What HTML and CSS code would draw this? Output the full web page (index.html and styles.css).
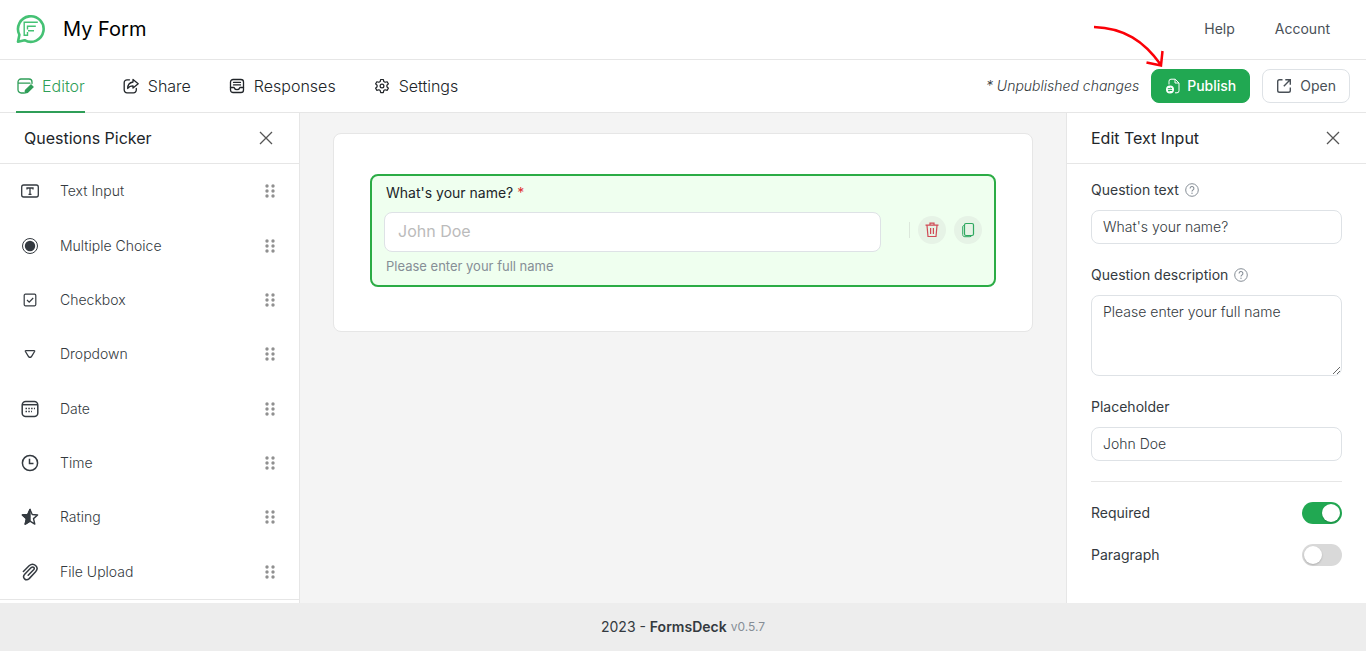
FILE: index.html
```html
<!DOCTYPE html>
<html lang="en">
<head>
    <meta charset="UTF-8">
    <meta name="viewport" content="width=device-width, initial-scale=1.0">
    <title>My Form - FormsDeck</title>
    <link rel="stylesheet" href="styles.css">
</head>
<body>
    <!-- Shared icons -->
    <svg class="sprite" aria-hidden="true">
        <symbol id="icon-close" viewBox="0 0 14 14">
            <path d="M1 1l12 12M13 1L1 13" fill="none" stroke="currentColor" stroke-width="1.3"/>
        </symbol>
        <symbol id="icon-drag" viewBox="0 0 10 14">
            <g fill="currentColor">
                <circle cx="2" cy="2" r="1.7"/><circle cx="8" cy="2" r="1.7"/>
                <circle cx="2" cy="7" r="1.7"/><circle cx="8" cy="7" r="1.7"/>
                <circle cx="2" cy="12" r="1.7"/><circle cx="8" cy="12" r="1.7"/>
            </g>
        </symbol>
        <symbol id="icon-help" viewBox="0 0 14 14">
            <g fill="none" stroke="currentColor">
                <circle cx="7" cy="7" r="6.3" stroke-width="1"/>
                <path d="M5.1 5.5a1.9 1.9 0 1 1 2.8 1.6c-.6.4-.9.7-.9 1.5" stroke-width="1.1"/>
            </g>
            <circle cx="7" cy="10.3" r=".7" fill="currentColor"/>
        </symbol>
    </svg>

    <header class="topbar">
        <a href="#" class="logo" aria-label="FormsDeck">
            <svg width="30" height="30" viewBox="0 0 30 30" fill="none" stroke="#45c174">
                <path d="M3.4 20.8A12.8 12.8 0 1 1 8.6 26.2L2 27.7z" stroke-width="2.6" stroke-linejoin="round"/>
                <path d="M21.8 8.3H8.2v13h3.300v-3.300M11.500 15.500v-3.300h8.300M12 16.800h6" stroke-width="1.400"/>
            </svg>
        </a>
        <h1>My Form</h1>
        <nav class="top-links">
            <a href="#">Help</a>
            <a href="#">Account</a>
        </nav>
    </header>

    <div class="toolbar">
        <nav class="tabs">
            <a href="#" class="tab active">
                <svg width="18" height="18" viewBox="0 0 18 18" fill="none" stroke="currentColor" stroke-width="1.3" stroke-linecap="round">
                    <path d="M8 16H5.2A3.2 3.2 0 0 1 2 12.800V5a3 3 0 0 1 3-3h8a3 3 0 0 1 3 3v1.500M2 6.200h12"/>
                    <path d="M9 16l.5-2.700 5.500-5.400 2 2-5.500 5.500z" fill="currentColor"/>
                </svg>
                Editor
            </a>
            <a href="#" class="tab">
                <svg width="18" height="18" viewBox="0 0 18 18" fill="none" stroke="currentColor" stroke-width="1.3" stroke-linejoin="round" stroke-linecap="round">
                    <path d="M7.500 2.800H5a2.800 2.800 0 0 0-2.800 2.800V13A2.800 2.800 0 0 0 5 15.800h6.500a2.800 2.800 0 0 0 2.800-2.800v-1.500"/>
                    <path d="M11 2.500l5.200 4.300L11 11V8.800c-2.600 0-4 .7-5.300 2.700 0-3.600 2-6 5.300-6.500z"/>
                </svg>
                Share
            </a>
            <a href="#" class="tab">
                <svg width="18" height="18" viewBox="0 0 18 18" fill="none" stroke="currentColor" stroke-width="1.3" stroke-linejoin="round" stroke-linecap="round">
                    <rect x="2.500" y="2.500" width="13" height="13" rx="2.600"/>
                    <path d="M5.500 5.400h7M5.500 7.900h7M2.500 10.500h3.600c.4 1.500 1.300 2.200 2.900 2.200s2.500-.7 2.900-2.200h3.600"/>
                </svg>
                Responses
            </a>
            <a href="#" class="tab">
                <svg width="18" height="18" viewBox="0 0 18 18" fill="none" stroke="currentColor" stroke-width="1.2" stroke-linejoin="round">
                    <path d="M7.700 2.500h2.600l.5 2 1.300.8 2-.6 1.300 2.200-1.500 1.400v1.500l1.500 1.400-1.300 2.200-2-.6-1.300.8-.5 2H7.700l-.5-2-1.300-.8-2 .6-1.300-2.200 1.500-1.400V8.300L2.600 6.900l1.300-2.200 2 .6 1.300-.8z"/>
                    <circle cx="9" cy="9" r="1.900"/>
                </svg>
                Settings
            </a>
        </nav>
        <div class="actions">
            <em class="status">* Unpublished changes</em>
            <div class="publish">
                <button type="button" class="btn btn-primary">
                    <svg width="16" height="16" viewBox="0 0 16 16" fill="none" stroke="currentColor" stroke-linejoin="round">
                        <path d="M4 6.500V3.200A2 2 0 0 1 6 1.200h4.200L14 5v7.800a2 2 0 0 1-2 2h-2M10 1.400V5h3.800"/>
                        <circle cx="5" cy="11.500" r="4" fill="currentColor" stroke="none"/>
                        <path d="M2.800 10.700h4l-1.200-1.200M7.200 12.500h-4l1.200 1.200" stroke="#21a852"/>
                    </svg>
                    Publish
                </button>
                <svg class="arrow" width="74" height="44" viewBox="0 0 74 44" fill="none" stroke="#fb0007" stroke-width="2.500">
                    <path d="M2 2C32 3 52 16 69 40M54.500 37.500L69 40.500 70.500 26" />
                </svg>
            </div>
            <button type="button" class="btn">
                <svg width="16" height="16" viewBox="0 0 16 16" fill="none" stroke="currentColor" stroke-width="1.400">
                    <path d="M6.500 1.700H3.500A1.800 1.800 0 0 0 1.700 3.500v9A1.800 1.800 0 0 0 3.500 14.300h9a1.800 1.800 0 0 0 1.800-1.800V9.500M9.300 1.700h5v5M14.200 1.800L7.800 8.200"/>
                </svg>
                Open
            </button>
        </div>
    </div>

    <main class="workspace">
        <!-- Questions picker -->
        <aside class="panel picker">
            <div class="panel-header">
                <h2>Questions Picker</h2>
                <button type="button" class="close" aria-label="Close picker"><svg width="14" height="14"><use href="#icon-close"/></svg></button>
            </div>
            <ul class="question-types">
                <li>
                    <svg width="20" height="20" viewBox="0 0 20 20" fill="none" stroke="currentColor">
                        <rect x="1.700" y="4" width="16.600" height="12" rx="2" stroke-width="1.300"/>
                        <path d="M7 8.500V7h6v1.500M10 7v6.500M8.500 13.300h3" stroke-width="1.300"/>
                    </svg>
                    <span>Text Input</span>
                    <svg class="drag" width="10" height="14"><use href="#icon-drag"/></svg>
                </li>
                <li>
                    <svg width="20" height="20" viewBox="0 0 20 20">
                        <circle cx="10" cy="10" r="7.500" fill="none" stroke="currentColor"/>
                        <circle cx="10" cy="10" r="5.200" fill="currentColor"/>
                    </svg>
                    <span>Multiple Choice</span>
                    <svg class="drag" width="10" height="14"><use href="#icon-drag"/></svg>
                </li>
                <li>
                    <svg width="20" height="20" viewBox="0 0 20 20" fill="none" stroke="currentColor" stroke-width="1.200">
                        <rect x="4.200" y="4.200" width="11.600" height="11.600" rx="1.200"/>
                        <path d="M7 10l2.200 2.200L13.200 8"/>
                    </svg>
                    <span>Checkbox</span>
                    <svg class="drag" width="10" height="14"><use href="#icon-drag"/></svg>
                </li>
                <li>
                    <svg width="20" height="20" viewBox="0 0 20 20" fill="none" stroke="currentColor" stroke-width="1.300" stroke-linejoin="round">
                        <path d="M5.900 6.700h8.200q.8 0 .5.800L11.300 12.800q-1.300 1.300-2.600 0L5.400 7.500q-.3-.8.500-.8z"/>
                    </svg>
                    <span>Dropdown</span>
                    <svg class="drag" width="10" height="14"><use href="#icon-drag"/></svg>
                </li>
                <li>
                    <svg width="20" height="20" viewBox="0 0 20 20" fill="none" stroke="currentColor" stroke-width="1.500">
                        <rect x="2.200" y="2.500" width="15.600" height="15" rx="3.500"/>
                        <path d="M2.500 5.700h15"/>
                        <path d="M5.500 9.500h9.500M5.500 12.500h6.500" stroke-dasharray="1.500 1.300"/>
                    </svg>
                    <span>Date</span>
                    <svg class="drag" width="10" height="14"><use href="#icon-drag"/></svg>
                </li>
                <li>
                    <svg width="20" height="20" viewBox="0 0 20 20" fill="none" stroke="currentColor" stroke-width="1.500">
                        <circle cx="10" cy="10" r="7.600"/>
                        <path d="M9.500 5.800v4.700h4"/>
                    </svg>
                    <span>Time</span>
                    <svg class="drag" width="10" height="14"><use href="#icon-drag"/></svg>
                </li>
                <li>
                    <svg width="20" height="20" viewBox="0 0 20 20" stroke="currentColor" stroke-width="1.400" stroke-linejoin="round">
                        <path d="M10 2.500l2.200 5 5.400.5-4.100 3.600 1.300 5.500L10 14.200l-4.800 2.900 1.300-5.500L2.400 8l5.400-.5z" fill="none"/>
                        <path d="M10 2.500v11.700l-4.800 2.900 1.300-5.500L2.400 8l5.400-.5z" fill="currentColor"/>
                    </svg>
                    <span>Rating</span>
                    <svg class="drag" width="10" height="14"><use href="#icon-drag"/></svg>
                </li>
                <li>
                    <svg width="20" height="20" viewBox="0 0 20 20" fill="none" stroke="currentColor" stroke-width="1.500" stroke-linecap="round">
                        <path d="M3.400 9.500l5.700-5.700c4.500-4.200 10.600 1.600 6.500 6l-6.400 6.800c-3.400 3-7.500-.9-4.500-4.300l6.500-6.700c2-1.700 4 .4 2.400 2.200l-5.400 5.500"/>
                    </svg>
                    <span>File Upload</span>
                    <svg class="drag" width="10" height="14"><use href="#icon-drag"/></svg>
                </li>
            </ul>
        </aside>

        <!-- Form canvas -->
        <section class="canvas">
            <div class="form-card">
                <div class="question">
                    <div class="question-field">
                        <label for="nameInput">What's your name? <span class="required">*</span></label>
                        <input type="text" id="nameInput" placeholder="John Doe">
                        <p>Please enter your full name</p>
                    </div>
                    <div class="question-actions">
                        <button type="button" class="round delete" aria-label="Delete question">
                            <svg width="16" height="16" viewBox="0 0 16 16" fill="none" stroke="currentColor" stroke-width="1.200">
                                <path d="M1.500 3.200h13M6 3V1.200h4V3M3 3.500l1 11h8l1-11M6.600 6v6M9.400 6v6"/>
                            </svg>
                        </button>
                        <button type="button" class="round copy" aria-label="Duplicate question">
                            <svg width="16" height="16" viewBox="0 0 16 16" fill="none" stroke="currentColor">
                                <rect x="4.500" y="1.500" width="9" height="12" rx="1.500" stroke-width="1.200"/>
                                <path d="M4.500 3.500C3 3.500 2.700 4 2.700 5v7.500c0 1.500.8 2.200 2.200 2.200h5c1 0 1.600-.4 1.800-1.200"/>
                            </svg>
                        </button>
                    </div>
                </div>
            </div>
        </section>

        <!-- Question settings -->
        <aside class="panel editor">
            <div class="panel-header">
                <h2>Edit Text Input</h2>
                <button type="button" class="close" aria-label="Close editor"><svg width="14" height="14"><use href="#icon-close"/></svg></button>
            </div>
            <form class="settings">
                <div class="field">
                    <label for="questionText">Question text <svg width="14" height="14"><use href="#icon-help"/></svg></label>
                    <input type="text" id="questionText" value="What's your name?">
                </div>
                <div class="field">
                    <label for="questionDescription">Question description <svg width="14" height="14"><use href="#icon-help"/></svg></label>
                    <textarea id="questionDescription">Please enter your full name</textarea>
                </div>
                <div class="field">
                    <label for="placeholder">Placeholder</label>
                    <input type="text" id="placeholder" value="John Doe">
                </div>
                <hr>
                <div class="switch-row">
                    <label for="required">Required</label>
                    <input type="checkbox" id="required" class="switch" checked>
                </div>
                <div class="switch-row">
                    <label for="paragraph">Paragraph</label>
                    <input type="checkbox" id="paragraph" class="switch">
                </div>
            </form>
        </aside>
    </main>

    <footer class="footer">
        <span>2023 - <strong>FormsDeck</strong></span>
        <small>v0.5.7</small>
    </footer>
</body>
</html>
```
FILE: styles.css
```css
* {
    box-sizing: border-box;
    margin: 0;
    padding: 0;
}

body {
    display: flex;
    flex-direction: column;
    min-height: 100vh;
    background: #fff;
    color: #343a40;
    font-family: Inter, sans-serif;
    font-size: 14px;
    line-height: 20px;
}

a {
    color: inherit;
    text-decoration: none;
}

button,
input,
textarea {
    font: inherit;
    color: inherit;
}

button {
    cursor: pointer;
}

svg {
    display: block;
    flex: none;
}

.sprite {
    position: absolute;
    width: 0;
    height: 0;
}

/* Top bar */
.topbar {
    display: flex;
    align-items: center;
    height: 60px;
    padding: 0 36px 2px 16px;
    border-bottom: 1px solid #e6e6e6;
}

.topbar h1 {
    margin-left: 17px;
    color: #000;
    font-size: 20px;
    font-weight: 400;
}

.top-links {
    display: flex;
    gap: 40px;
    margin-left: auto;
    color: #495057;
}

/* Tabs and actions */
.toolbar {
    display: flex;
    justify-content: space-between;
    height: 53px;
    padding: 0 16px;
    border-bottom: 1px solid #e6e6e6;
}

.tabs {
    display: flex;
    gap: 37px;
}

.tab {
    display: flex;
    align-items: center;
    gap: 8px;
    margin-bottom: -1px;
    border-bottom: 2px solid transparent;
    font-size: 16px;
    font-weight: 300;
    color: #212529;
}

.tab.active {
    color: #2f9e58;
    border-color: #2f9e58;
}

.actions {
    display: flex;
    align-items: center;
    gap: 12px;
}

.status {
    font-weight: 300;
}

.publish {
    position: relative;
}

.arrow {
    position: absolute;
    right: 84px;
    bottom: 34px;
    pointer-events: none;
}

.btn {
    display: flex;
    align-items: center;
    gap: 8px;
    height: 34px;
    padding: 0 13px;
    border: 1px solid #dee2e6;
    border-radius: 8px;
    background: #fff;
    color: #495057;
}

.btn-primary {
    gap: 6px;
    border-color: #21a852;
    background: #21a852;
    color: #fff;
    font-weight: 500;
}

/* Workspace */
.workspace {
    flex: 1;
    display: grid;
    grid-template-columns: 300px 1fr 300px;
    background: #f4f4f4;
}

.panel {
    display: flex;
    flex-direction: column;
    background: #fff;
}

.picker {
    border-right: 1px solid #e6e6e6;
}

.editor {
    border-left: 1px solid #e6e6e6;
}

.panel-header {
    display: flex;
    align-items: center;
    justify-content: space-between;
    height: 51px;
    padding: 0 24px;
    border-bottom: 1px solid #e6e6e6;
}

.panel-header h2 {
    color: #212529;
    font-size: 16px;
    font-weight: 400;
}

.close {
    padding: 2px;
    border: none;
    background: none;
    color: #555;
}

.question-types {
    flex: 1;
    display: grid;
    grid-auto-rows: 1fr;
    margin-bottom: 3px;
    border-bottom: 1px solid #e6e6e6;
    list-style: none;
}

.question-types li {
    display: flex;
    align-items: center;
    gap: 20px;
    padding: 0 24px 0 20px;
    font-weight: 300;
}

.drag {
    margin-left: auto;
    color: #909090;
}

/* Form card */
.canvas {
    padding: 20px;
}

.form-card {
    max-width: 700px;
    margin: 0 auto;
    padding: 40px 36px 44px;
    border: 1px solid #e6e6e6;
    border-radius: 8px;
    background: #fff;
}

.question {
    display: flex;
    align-items: center;
    gap: 28px;
    padding: 7px 12px 8px;
    border: 2px solid #2bac45;
    border-radius: 8px;
    background: #efffef;
}

.question-field {
    flex: 1;
}

.question-field label {
    display: block;
    padding-left: 2px;
    color: #212529;
}

.required {
    color: #e03131;
}

.question-field input {
    display: block;
    width: 100%;
    height: 40px;
    margin: 9px 0 4px;
    padding: 0 13px 2px;
    border: 1px solid #dee2e6;
    border-radius: 8px;
    background: #fff;
    font-size: 16px;
}

.question-field input::placeholder {
    color: #bbb;
}

.question-field p {
    padding: 0 0 1px 2px;
    color: #868e96;
    font-size: 13px;
}

.question-actions {
    display: flex;
    align-items: center;
    gap: 8px;
}

.question-actions::before {
    content: "";
    width: 1px;
    height: 16px;
    background: #dce8dc;
}

.round {
    display: grid;
    place-items: center;
    width: 28px;
    height: 28px;
    border: none;
    border-radius: 50%;
    background: #e6f3e6;
}

.delete {
    color: #d04a55;
}

.copy {
    color: #2fa860;
}

/* Question settings */
.settings {
    display: flex;
    flex-direction: column;
    gap: 20px;
    padding: 16px 24px;
}

.field + .field {
    margin-top: 1px;
}

.field label {
    display: flex;
    align-items: center;
    gap: 6px;
    margin-bottom: 10px;
}

.field svg {
    color: #868e96;
}

.field input,
.field textarea {
    display: block;
    width: 100%;
    height: 34px;
    padding: 0 11px 2px;
    border: 1px solid #dee2e6;
    border-radius: 8px;
    background: #fff;
    font-weight: 300;
}

.field textarea {
    height: 81px;
    padding: 6px 11px;
    resize: vertical;
}

.settings hr {
    border: none;
    border-top: 1px solid #e6e6e6;
}

.switch-row {
    display: flex;
    align-items: center;
    justify-content: space-between;
}

.switch {
    appearance: none;
    width: 40px;
    height: 22px;
    padding: 2px;
    border-radius: 11px;
    background: #d9d9d9;
    cursor: pointer;
}

.switch::before {
    content: "";
    display: block;
    width: 18px;
    height: 18px;
    border-radius: 50%;
    background: #fff;
    box-shadow: 0 1px 2px rgba(0, 0, 0, 0.2);
}

.switch:checked {
    background: #21a852;
}

.switch:checked::before {
    margin-left: auto;
}

/* Footer */
.footer {
    display: flex;
    align-items: center;
    justify-content: center;
    gap: 4px;
    height: 48px;
    background: #ededed;
}

.footer strong {
    font-weight: 600;
}

.footer small {
    color: #868e96;
    font-size: 12px;
}
```
